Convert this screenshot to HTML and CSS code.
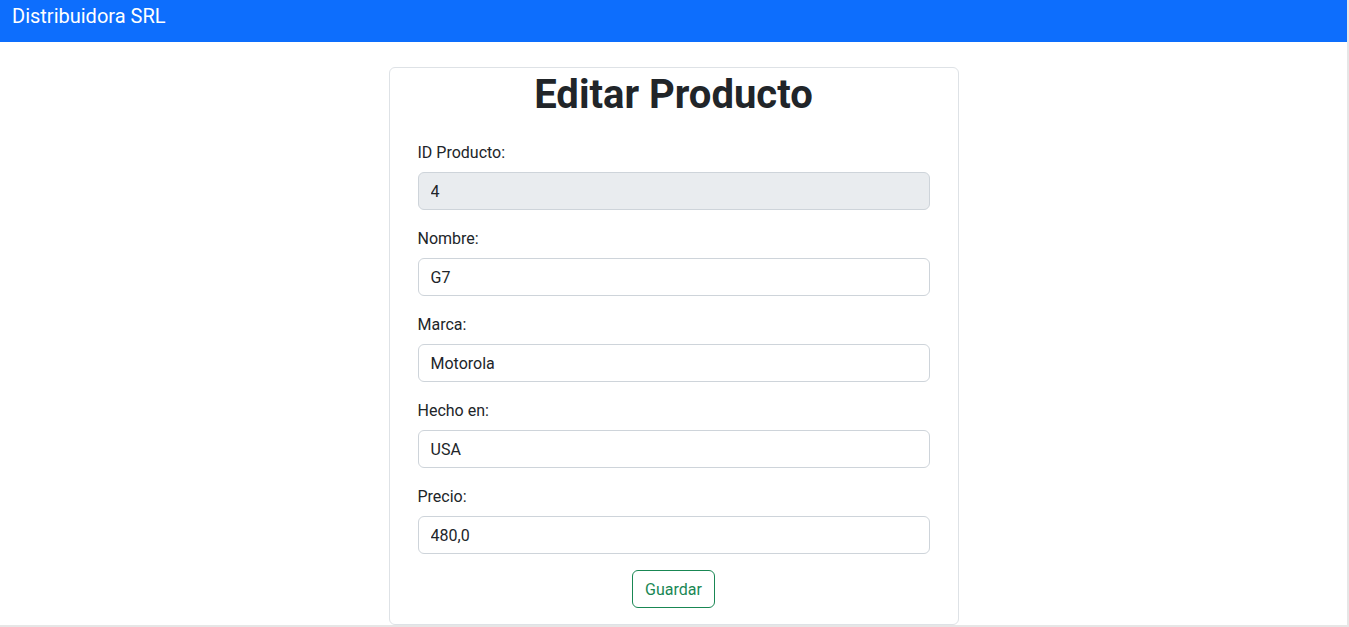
FILE: index.html
```html
<!DOCTYPE html>
<html lang="es">
<head>
<meta charset="utf-8">
<title>Editar Producto</title>
<link rel="stylesheet" href="styles.css">
</head>
<body>
<nav class="navbar">
  <a class="brand" href="#">Distribuidora SRL</a>
</nav>
<main class="page">
  <section class="card">
    <h1 class="title">Editar Producto</h1>
    <form class="form">
      <div class="group">
        <label class="label" for="id">ID Producto:</label>
        <input class="input" id="id" type="text" value="4" disabled>
      </div>
      <div class="group">
        <label class="label" for="nombre">Nombre:</label>
        <input class="input" id="nombre" type="text" value="G7">
      </div>
      <div class="group">
        <label class="label" for="marca">Marca:</label>
        <input class="input" id="marca" type="text" value="Motorola">
      </div>
      <div class="group">
        <label class="label" for="hecho">Hecho en:</label>
        <input class="input" id="hecho" type="text" value="USA">
      </div>
      <div class="group">
        <label class="label" for="precio">Precio:</label>
        <input class="input" id="precio" type="text" value="480,0">
      </div>
      <div class="actions">
        <button class="btn" type="button">Guardar</button>
      </div>
    </form>
  </section>
</main>
</body>
</html>
```
FILE: styles.css
```css
* { box-sizing: border-box; }
html {
  margin: 0;
  padding: 0;
  background: #e6e6e6;
  overflow: hidden;
}
body {
  margin: 0 2px 0 0;
  padding: 0;
  font-family: Roboto, "Noto Sans", sans-serif;
  font-size: 16px;
  line-height: 1.5;
  color: #212529;
  background: #fff;
}
.navbar {
  height: 42px;
  background: #0d6efd;
  display: flex;
  align-items: flex-start;
  padding: 1px 12px 0;
}
.brand {
  color: #fff;
  text-decoration: none;
  font-size: 20px;
  line-height: 30px;
}
.page {
  display: flex;
  justify-content: center;
  padding-top: 25px;
}
.card {
  width: 570px;
  border: 1px solid #dee2e6;
  border-radius: 6px;
  padding: 0 28px 16px;
}
.title {
  margin: 0 0 21px;
  padding-top: 3px;
  text-align: center;
  font-size: 40px;
  line-height: 48px;
  font-weight: 700;
}
.form { display: flex; flex-direction: column; }
.group {
  display: flex;
  flex-direction: column;
  gap: 8px;
  margin-bottom: 16px;
}
.label { line-height: 24px; padding-top: 1px; margin-bottom: -1px; }
.input {
  height: 38px;
  width: 100%;
  border: 1px solid #ced4da;
  border-radius: 6px;
  padding: 6px 12px;
  font: inherit;
  color: #212529;
  background: #fff;
}
.input:disabled { background: #e9ecef; color: #212529; }
.actions { display: flex; justify-content: center; }
.btn {
  font: inherit;
  height: 38px;
  padding: 7px 12px 5px;
  color: #198754;
  background: transparent;
  border: 1px solid #198754;
  border-radius: 6px;
}
```
